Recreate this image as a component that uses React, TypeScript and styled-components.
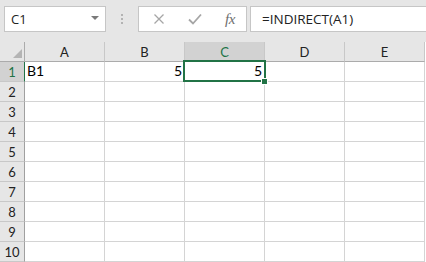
import React from 'react';
import styled, { createGlobalStyle } from 'styled-components';

const GlobalStyle = createGlobalStyle`
  html, body {
    margin: 0;
    padding: 0;
    background: #ffffff;
    overflow: hidden;
  }
`;

const Window = styled.div`
  width: 426px;
  height: 262px;
  background: #ffffff;
  font-family: 'Open Sans', 'Noto Sans', sans-serif;
`;

const Toolbar = styled.div`
  height: 42px;
  box-sizing: border-box;
  background: #e6e6e6;
  display: flex;
  align-items: flex-start;
  padding: 6px 0 0 4px;
`;

const NameBox = styled.div`
  width: 102px;
  height: 26px;
  box-sizing: border-box;
  border: 1px solid #c6c6c6;
  background: #ffffff;
  display: flex;
  align-items: center;
  justify-content: space-between;
  padding: 0 6px 0 6px;
  font-size: 13px;
  color: #222222;
`;

const DropArrow = styled.span`
  width: 0;
  height: 0;
  border-left: 4px solid transparent;
  border-right: 4px solid transparent;
  border-top: 4px solid #7a7a7a;
  margin-top: -2px;
`;

const Grip = styled.div`
  width: 32px;
  height: 26px;
  display: flex;
  flex-direction: column;
  align-items: center;
  justify-content: center;
  gap: 2px;
`;

const Dot = styled.span`
  width: 2px;
  height: 2px;
  background: #b3b3b3;
`;

const ButtonBox = styled.div`
  width: 109px;
  height: 26px;
  box-sizing: border-box;
  border: 1px solid #c6c6c6;
  background: #ffffff;
  display: flex;
  align-items: center;
  padding-left: 11px;
  gap: 18px;
`;

const IconSlot = styled.span`
  width: 18px;
  height: 18px;
  display: flex;
  align-items: center;
  justify-content: center;
`;

const Fx = styled.span`
  font-family: 'Liberation Serif', serif;
  font-style: italic;
  font-size: 15px;
  color: #6e6e6e;
  letter-spacing: -0.5px;
  margin-left: -2px;
`;

const FormulaInput = styled.div`
  flex: 1;
  height: 26px;
  box-sizing: border-box;
  margin-left: 3px;
  border: 1px solid #c6c6c6;
  border-right: none;
  background: #ffffff;
  display: flex;
  align-items: center;
  padding-left: 11px;
  font-size: 13.5px;
  color: #222222;
`;

const Sheet = styled.div`
  display: grid;
  grid-template-columns: 25px repeat(5, 80px);
  grid-auto-rows: 20px;
`;

const Corner = styled.div`
  box-sizing: border-box;
  background: #e6e6e6;
  border-right: 1px solid #ababab;
  border-bottom: 1px solid #ababab;
  position: relative;
`;

const CornerTriangle = styled.span`
  position: absolute;
  right: 2px;
  bottom: 3px;
  width: 0;
  height: 0;
  border-left: 9px solid transparent;
  border-bottom: 9px solid #b4b4b4;
`;

const ColHeader = styled.div<{ $active?: boolean }>`
  box-sizing: border-box;
  background: ${(p) => (p.$active ? '#d2d2d2' : '#e6e6e6')};
  border-right: 1px solid #c8c8c8;
  border-bottom: 1px solid ${(p) => (p.$active ? '#217346' : '#ababab')};
  display: flex;
  align-items: center;
  justify-content: center;
  font-family: 'Lato', 'Liberation Sans', sans-serif;
  font-size: 13px;
  color: ${(p) => (p.$active ? '#217346' : '#222222')};
`;

const RowHeader = styled.div<{ $active?: boolean }>`
  box-sizing: border-box;
  background: ${(p) => (p.$active ? '#d2d2d2' : '#e6e6e6')};
  border-right: 1px solid ${(p) => (p.$active ? '#217346' : '#a0a0a0')};
  border-bottom: 1px solid #c8c8c8;
  display: flex;
  align-items: center;
  justify-content: center;
  font-family: 'Lato', 'Liberation Sans', sans-serif;
  font-size: 13px;
  color: ${(p) => (p.$active ? '#217346' : '#222222')};
`;

const Cell = styled.div<{ $align?: 'left' | 'right' }>`
  box-sizing: border-box;
  border-right: 1px solid #d4d4d4;
  border-bottom: 1px solid #d4d4d4;
  display: flex;
  align-items: flex-end;
  justify-content: ${(p) => (p.$align === 'right' ? 'flex-end' : 'flex-start')};
  padding: 0 2px 1px 2px;
  font-family: 'Lato', 'Liberation Sans', sans-serif;
  font-size: 14px;
  line-height: 18px;
  color: #000000;
  position: relative;
`;

const Selection = styled.span`
  position: absolute;
  z-index: 2;
  left: -2px;
  top: -2px;
  width: 83px;
  height: 22px;
  box-sizing: border-box;
  border: 2px solid #217346;
  pointer-events: none;
`;

const FillHandle = styled.span`
  position: absolute;
  right: -3px;
  bottom: -4px;
  width: 5px;
  height: 5px;
  background: #217346;
  outline: 1px solid #ffffff;
`;

const columns = ['A', 'B', 'C', 'D', 'E'];
const rows = Array.from({ length: 10 }, (_, i) => i + 1);

const data: Record<string, { value: string; align: 'left' | 'right' }> = {
  A1: { value: 'B1', align: 'left' },
  B1: { value: '5', align: 'right' },
  C1: { value: '5', align: 'right' },
};

const App = () => {
  return (
    <>
      <GlobalStyle />
      <Window>
        <Toolbar>
          <NameBox>
            <span>C1</span>
            <DropArrow />
          </NameBox>
          <Grip>
            <Dot />
            <Dot />
            <Dot />
          </Grip>
          <ButtonBox>
            <IconSlot>
              <svg width="12" height="12" viewBox="0 0 12 12">
                <path d="M1.5 1.5 L10.5 10.5 M10.5 1.5 L1.5 10.5" stroke="#a6a6a6" strokeWidth="1.3" fill="none" />
              </svg>
            </IconSlot>
            <IconSlot>
              <svg width="14" height="12" viewBox="0 0 14 12">
                <path d="M1 6.5 L5 10.5 L13 1.5" stroke="#a6a6a6" strokeWidth="1.8" fill="none" />
              </svg>
            </IconSlot>
            <IconSlot>
              <Fx>fx</Fx>
            </IconSlot>
          </ButtonBox>
          <FormulaInput>=INDIRECT(A1)</FormulaInput>
        </Toolbar>
        <Sheet>
          <Corner>
            <CornerTriangle />
          </Corner>
          {columns.map((c) => (
            <ColHeader key={c} $active={c === 'C'}>
              {c}
            </ColHeader>
          ))}
          {rows.map((r) => (
            <React.Fragment key={r}>
              <RowHeader $active={r === 1}>{r}</RowHeader>
              {columns.map((c) => {
                const id = `${c}${r}`;
                const cell = data[id];
                return (
                  <Cell key={id} $align={cell?.align}>
                    {cell?.value}
                    {id === 'C1' && (
                      <Selection>
                        <FillHandle />
                      </Selection>
                    )}
                  </Cell>
                );
              })}
            </React.Fragment>
          ))}
        </Sheet>
      </Window>
    </>
  );
};

export default App;
